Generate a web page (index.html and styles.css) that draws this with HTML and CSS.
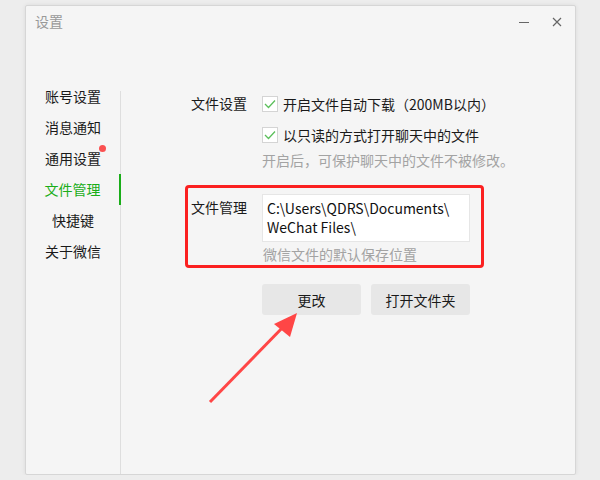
FILE: index.html
```html
<!DOCTYPE html>
<html lang="zh-CN">
    <head>
        <meta charset="UTF-8">
        <title>设置</title>
        <link rel="stylesheet" href="styles.css">
    </head>
    <body>
        <div class="window">
            <div class="titlebar">
                <span class="title">设置</span>
                <div class="controls">
                    <span class="min"></span>
                    <svg class="close" width="10" height="10" viewBox="0 0 10 10">
                        <path d="M1 1L9 9M9 1L1 9" stroke="#666" stroke-width="1.2" fill="none"/>
                    </svg>
                </div>
            </div>
            <div class="main">
                <ul class="nav">
                    <li>账号设置</li>
                    <li>消息通知</li>
                    <li><span class="badge">通用设置</span></li>
                    <li class="active">文件管理</li>
                    <li>快捷键</li>
                    <li>关于微信</li>
                </ul>
                <div class="content">
                    <div class="settings">
                        <div class="label">文件设置</div>
                        <div class="options">
                            <div class="check">
                                <span class="box"><svg width="12" height="10" viewBox="0 0 12 10"><path d="M1 5L4.5 8.5L11 1.5" stroke="#5bbf5b" stroke-width="1.3" fill="none"/></svg></span>
                                开启文件自动下载（200MB以内）
                            </div>
                            <div class="check">
                                <span class="box"><svg width="12" height="10" viewBox="0 0 12 10"><path d="M1 5L4.5 8.5L11 1.5" stroke="#5bbf5b" stroke-width="1.3" fill="none"/></svg></span>
                                以只读的方式打开聊天中的文件
                            </div>
                            <div class="hint first">开启后，可保护聊天中的文件不被修改。</div>
                        </div>
                    </div>
                    <div class="highlight">
                        <div class="label">文件管理</div>
                        <div class="field">
                            <div class="path">C:\Users\QDRS\Documents\<br>WeChat Files\</div>
                            <div class="hint">微信文件的默认保存位置</div>
                        </div>
                    </div>
                    <div class="buttons">
                        <button>更改</button>
                        <button>打开文件夹</button>
                    </div>
                </div>
            </div>
            <svg class="arrow" width="100" height="100" viewBox="0 0 100 100">
                <line x1="6" y1="96" x2="82" y2="18" stroke="#ff4646" stroke-width="3"/>
                <polygon points="93,7 70,18 86,31" fill="#ff4646"/>
            </svg>
        </div>
    </body>
</html>
```

FILE: styles.css
```css
body {
    margin: 0;
    padding: 5px 0 0 25px;
    background: #ededed;
    font-family: "Noto Sans CJK SC", "Noto Sans", sans-serif;
    font-size: 14px;
    color: #1a1a1a;
}
.window {
    position: relative;
    width: 549px;
    height: 468px;
    background: #f5f5f5;
    border: 1px solid #d6d6d6;
    border-radius: 2px;
    box-shadow: 0 0 4px rgba(0, 0, 0, 0.08);
    display: flex;
    flex-direction: column;
}
.titlebar {
    height: 75px;
    display: flex;
    justify-content: space-between;
    align-items: flex-start;
    padding: 5px 0 0 9px;
    box-sizing: border-box;
}
.title {
    color: #999;
    line-height: 20px;
}
.controls {
    display: flex;
    align-items: center;
    gap: 23px;
    padding: 6px 13px 0 0;
}
.min {
    width: 10px;
    height: 1px;
    background: #666;
}
.main {
    flex: 1;
    display: flex;
}
.nav {
    list-style: none;
    margin: 0;
    padding: 0;
    width: 94px;
}
.nav li {
    height: 31px;
    line-height: 31px;
    text-align: center;
}
.nav li.active {
    position: relative;
    color: #1aad19;
    border-right: 2px solid #1aad19;
    margin-right: -1px;
}
.badge {
    position: relative;
}
.badge::after {
    content: "";
    position: absolute;
    right: -5px;
    top: -3px;
    width: 7px;
    height: 7px;
    border-radius: 50%;
    background: #fa5151;
}
.content {
    flex: 1;
    margin-top: 10px;
    border-left: 1px solid #dedede;
    padding-left: 64px;
}
.settings {
    display: flex;
    margin-left: 6px;
}
.label {
    width: 71px;
    line-height: 25px;
    flex-shrink: 0;
}
.options {
    display: flex;
    flex-direction: column;
    gap: 6px;
}
.check {
    height: 25px;
    display: flex;
    align-items: center;
    gap: 5px;
}
.box {
    width: 14px;
    height: 14px;
    background: #fff;
    border: 1px solid #d4d4d4;
    display: flex;
    align-items: center;
    justify-content: center;
}
.hint {
    color: #a3a3a3;
    line-height: 18px;
}
.hint.first {
    margin-top: -2px;
}
.highlight {
    margin-top: 16px;
    width: 290px;
    border: 3px solid #fb2020;
    border-radius: 4px;
    padding: 6px 0 2px 3px;
    display: flex;
}
.highlight .label {
    line-height: 20px;
    padding-top: 3px;
}
.path {
    width: 198px;
    height: 38px;
    padding: 4px 4px;
    background: #fff;
    border: 1px solid #e6e6e6;
    line-height: 19px;
    color: #111;
}
.field .hint {
    margin-top: 3px;
    padding-left: 1px;
}
.buttons {
    display: flex;
    gap: 10px;
    margin: 16px 0 0 77px;
}
button {
    width: 99px;
    height: 31px;
    border: none;
    border-radius: 3px;
    background: #e7e7e7;
    font-family: inherit;
    font-size: 14px;
    color: #1a1a1a;
}
.arrow {
    position: absolute;
    left: 178px;
    top: 300px;
}
```
